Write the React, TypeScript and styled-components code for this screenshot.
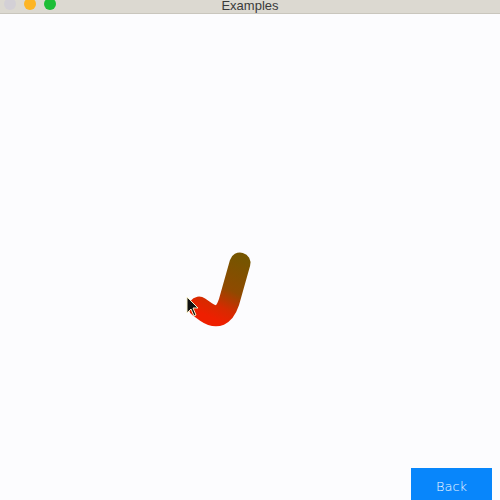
import React from "react";
import styled, { createGlobalStyle } from "styled-components";

const Global = createGlobalStyle`
  html, body { margin: 0; padding: 0; width: 500px; height: 500px; overflow: hidden; background: #fcfcfe; }
  #root { width: 500px; height: 500px; }
`;

const Window = styled.div`
  width: 500px;
  height: 500px;
  display: flex;
  flex-direction: column;
  background: #fcfcfe;
  font-family: "Liberation Sans", Arial, sans-serif;
`;

const TitleBar = styled.div`
  position: relative;
  height: 13px;
  flex: none;
  background: #dcd9d1;
  border-bottom: 1px solid #c9c6bd;
  display: flex;
  align-items: flex-end;
  justify-content: center;
`;

const Title = styled.div`
  font-size: 13px;
  line-height: 13px;
  color: #3a3a3a;
  margin-bottom: 1px;
`;

const Lights = styled.div`
  position: absolute;
  left: 4px;
  top: -2px;
  display: flex;
  gap: 8px;
`;

const Light = styled.div<{ $c: string }>`
  width: 12px;
  height: 12px;
  border-radius: 50%;
  background: ${(p) => p.$c};
`;

const Content = styled.div`
  flex: 1;
  display: flex;
  flex-direction: column;
`;

const Canvas = styled.svg`
  flex: 1;
  display: block;
`;

const Footer = styled.div`
  display: flex;
  justify-content: flex-end;
  padding-right: 8px;
`;

const BackButton = styled.button`
  width: 81px;
  height: 32px;
  border: none;
  background: #0886fb;
  color: #f2f8ff;
  font-family: "DejaVu Sans", sans-serif;
  font-weight: 300;
  font-size: 13px;
  padding: 4px 0 0 0;
  cursor: pointer;
`;

export default function App() {
  return (
    <Window>
      <Global />
      <TitleBar>
        <Lights>
          <Light $c="#d3d0d6" />
          <Light $c="#fdb524" />
          <Light $c="#1ebe38" />
        </Lights>
        <Title>Examples</Title>
      </TitleBar>
      <Content>
        <Canvas viewBox="0 14 500 454">
          <defs>
            <linearGradient id="strokeGrad" gradientUnits="userSpaceOnUse" x1="240" y1="258" x2="212" y2="318">
              <stop offset="0" stopColor="#765500" />
              <stop offset="0.5" stopColor="#8f4a00" />
              <stop offset="0.8" stopColor="#d72a00" />
              <stop offset="1" stopColor="#ee1f00" />
            </linearGradient>
          </defs>
          <path
            d="M240 263 L229 302 Q222 323 206 312 L199 307"
            fill="none"
            stroke="url(#strokeGrad)"
            strokeWidth="21"
            strokeLinecap="round"
            strokeLinejoin="round"
          />
          <path
            d="M187 297 L187 313 L191 309 L194 316 L196 315 L193 308 L198 308 Z"
            fill="#111"
            stroke="#f6f0c8"
            strokeWidth="1"
          />
        </Canvas>
        <Footer>
          <BackButton>Back</BackButton>
        </Footer>
      </Content>
    </Window>
  );
}
